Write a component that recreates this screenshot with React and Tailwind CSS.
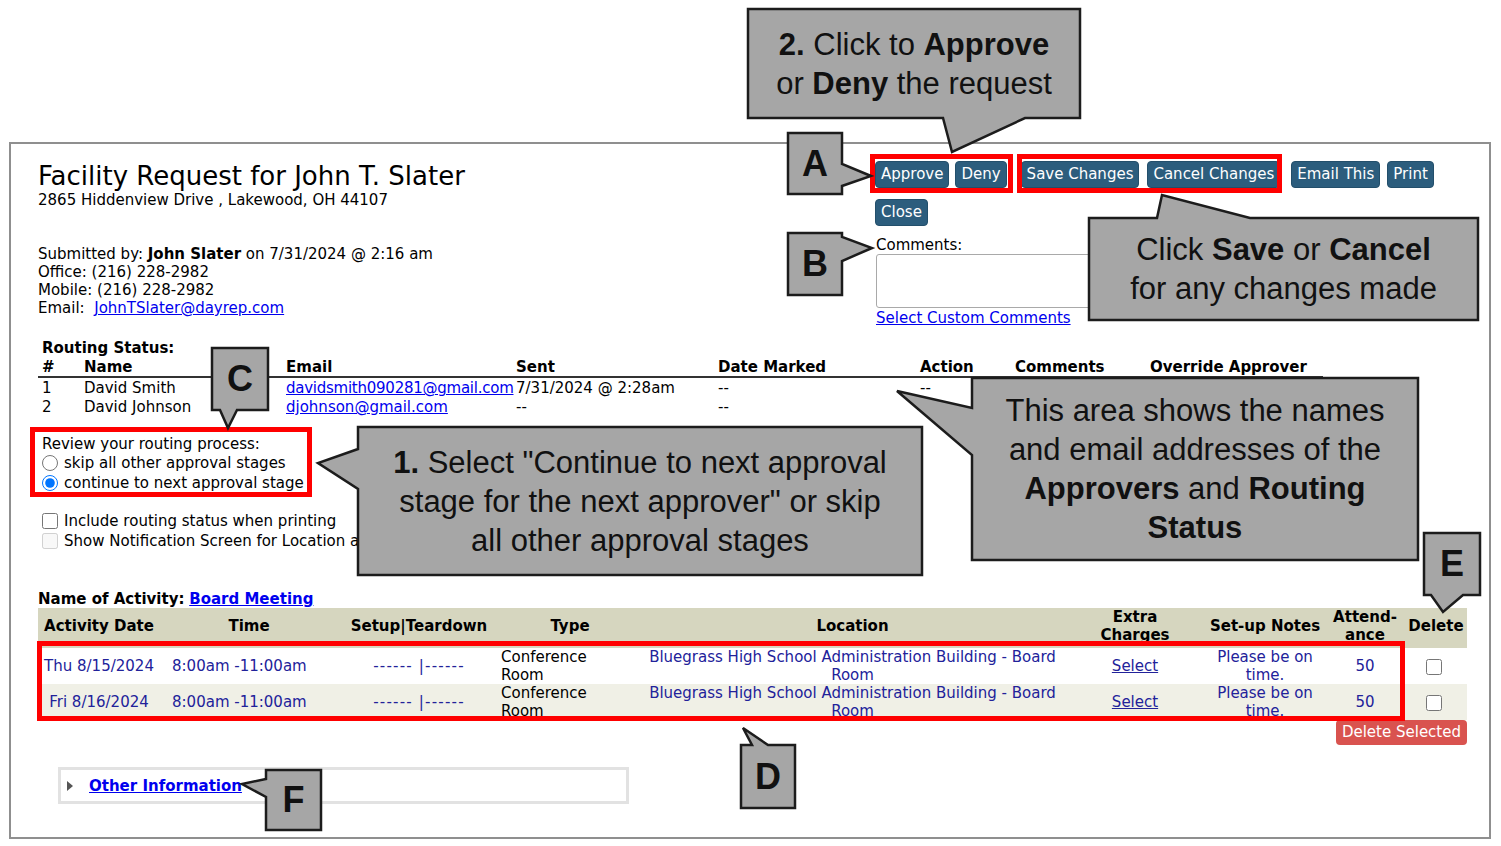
import React from 'react';

const Btn = ({ children, className = '' }) => (
  <button className={`h-[27px] px-[5px] rounded-[4px] bg-[#2c5d7d] border border-[#234f6b] text-white text-[15px] leading-none ${className}`}>
    {children}
  </button>
);

const routingCols = 'grid w-[1285px] grid-cols-[46px_202px_230px_202px_202px_95px_135px_173px]';

const Callouts = () => (
  <div className="absolute inset-0 pointer-events-none">
    <svg width="1501" height="846" className="absolute left-0 top-0">
      {/* red highlight boxes */}
      <g fill="none" stroke="#ff0000" strokeWidth="5">
        <rect x="872.5" y="156.5" width="138" height="34" />
        <rect x="1019.5" y="156.5" width="260" height="34" />
        <rect x="32.5" y="429.5" width="277" height="65" />
        <rect x="39.5" y="643.5" width="1363" height="75" />
      </g>
      {/* speech boxes */}
      <g fill="#a6a6a6" stroke="#1c1c1c" strokeWidth="2.5">
        <path d="M748 9 H1080 V118 H1025 L952 152 L943 118 H748 Z" />
        <path d="M788 133 H842 V164 L871 176 L842 186 V194 H788 Z" />
        <path d="M788 233 H842 V237 L872 248 L842 261 V295 H788 Z" />
        <path d="M1089 218 H1157 L1162 195 L1250 218 H1478 V320 H1089 Z" />
        <path d="M212 348 H268 V410 H237 L228 428 L220 410 H212 Z" />
        <path d="M358 427 H922 V575 H358 V489 L318 463 L358 449 Z" />
        <path d="M972 378 H1418 V560 H972 V455 L897 391 L972 408 Z" />
        <path d="M1424 533 H1480 V595 H1463 L1443 612 L1431 595 H1424 Z" />
        <path d="M741 745 H752 L743 728 L768 745 H795 V808 H741 Z" />
        <path d="M266 770 H321 V830 H266 V797 L242 784 L266 779 Z" />
      </g>
    </svg>

    <div className="absolute left-[748px] top-[9px] w-[332px] h-[109px] flex items-center justify-center text-center font-['Liberation_Sans',Arial,sans-serif] text-[31px] leading-[39px] text-[#111]">
      <p><b>2.</b> Click to <b>Approve</b><br />or <b>Deny</b> the request</p>
    </div>
    <div className="absolute left-[1089px] top-[218px] w-[389px] h-[102px] flex items-center justify-center text-center font-['Liberation_Sans',Arial,sans-serif] text-[31px] leading-[39px] text-[#111]">
      <p>Click <b>Save</b> or <b>Cancel</b><br />for any changes made</p>
    </div>
    <div className="absolute left-[358px] top-[427px] w-[564px] h-[148px] flex items-center justify-center text-center font-['Liberation_Sans',Arial,sans-serif] text-[31px] leading-[39px] text-[#111]">
      <p><b>1.</b> Select "Continue to next approval<br />stage for the next approver" or skip<br />all other approval stages</p>
    </div>
    <div className="absolute left-[972px] top-[378px] w-[446px] h-[182px] flex items-center justify-center text-center font-['Liberation_Sans',Arial,sans-serif] text-[31px] leading-[39px] text-[#111]">
      <p>This area shows the names<br />and email addresses of the<br /><b>Approvers</b> and <b>Routing</b><br /><b>Status</b></p>
    </div>

    {[
      ['A', 'left-[788px] top-[133px] w-[54px] h-[61px]'],
      ['B', 'left-[788px] top-[233px] w-[54px] h-[62px]'],
      ['C', 'left-[212px] top-[348px] w-[56px] h-[62px]'],
      ['D', 'left-[741px] top-[745px] w-[54px] h-[63px]'],
      ['E', 'left-[1424px] top-[533px] w-[56px] h-[62px]'],
      ['F', 'left-[266px] top-[770px] w-[55px] h-[60px]'],
    ].map(([l, pos]) => (
      <div key={l} className={`absolute ${pos} flex items-center justify-center font-['Liberation_Sans',Arial,sans-serif] font-bold text-[36px] text-[#111]`}>
        {l}
      </div>
    ))}
  </div>
);

const navy = 'text-[#22229a]';

const EventRow = ({ date, shaded }) => (
  <tr className={`h-[36px] ${shaded ? 'bg-[#f0f0e6]' : 'bg-white'}`}>
    <td className={`text-center ${navy}`}>{date}</td>
    <td className={`pl-[12px] ${navy}`}>8:00am -11:00am</td>
    <td className={`text-center tracking-[1.2px] ${navy}`}>------ |------</td>
    <td className="pl-[1px] pr-[20px]">Conference Room</td>
    <td className={`text-center px-[8px] ${navy}`}>Bluegrass High School Administration Building - Board Room</td>
    <td className={`text-center ${navy}`}><a className="underline">Select</a></td>
    <td className={`text-center px-[8px] ${navy}`}>Please be on time.</td>
    <td className={`text-center ${navy}`}>50</td>
    <td className="text-center pr-[4px]"><input type="checkbox" className="w-4 h-4 m-0 align-middle" /></td>
  </tr>
);

export default function App() {
  return (
    <div className="relative w-[1501px] h-[846px] overflow-hidden bg-white text-black font-['DejaVu_Sans',Verdana,sans-serif] text-[15px] leading-[18px]">
      <div className="pt-[142px] pl-[9px]">
        <div className="w-[1482px] h-[697px] border-2 border-[#8f8f8f] pl-[27px] pt-[17px]">
          {/* Header */}
          <div className="flex items-start">
            <div className="w-[837px]">
              <h1 className="text-[26px] leading-[30px] font-normal">Facility Request for John T. Slater</h1>
              <div>2865 Hiddenview Drive , Lakewood, OH 44107</div>
              <div className="mt-[36px]">Submitted by: <b>John Slater</b> on 7/31/2024 @ 2:16 am</div>
              <div>Office: (216) 228-2982</div>
              <div>Mobile: (216) 228-2982</div>
              <div>Email:&nbsp; <a className="text-[#0000ee] underline">JohnTSlater@dayrep.com</a></div>
            </div>
            <div className="flex flex-col items-start">
              <div className="flex">
                <Btn>Approve</Btn>
                <Btn className="ml-[6px]">Deny</Btn>
                <Btn className="ml-[14px]">Save Changes</Btn>
                <Btn className="ml-[8px]">Cancel Changes</Btn>
                <Btn className="ml-[11px]">Email This</Btn>
                <Btn className="ml-[7px]">Print</Btn>
              </div>
              <Btn className="mt-[11px]">Close</Btn>
              <div className="mt-[10px] ml-[1px]">Comments:</div>
              <textarea className="ml-[1px] w-[290px] h-[54px] border border-[#a9a9a9] rounded-[3px] resize-none" />
              <a className="mt-[1px] ml-[1px] text-[#0000ee] underline">Select Custom Comments</a>
            </div>
          </div>

          {/* Routing status */}
          <div className="mt-[12px] pl-[4px] font-bold">Routing Status:</div>
          <div className={`${routingCols} h-[21px] pt-[1px] border-b-2 border-[#333] font-bold`}>
            <span className="pl-[4px]">#</span>
            <span>Name</span>
            <span>Email</span>
            <span>Sent</span>
            <span>Date Marked</span>
            <span>Action</span>
            <span>Comments</span>
            <span>Override Approver</span>
          </div>
          <div className={`${routingCols} h-[20px] pt-[1px] leading-[19px]`}>
            <span className="pl-[4px]">1</span>
            <span>David Smith</span>
            <a className="text-[#0000ee] underline whitespace-nowrap tracking-[-0.25px]">davidsmith090281@gmail.com</a>
            <span>7/31/2024 @ 2:28am</span>
            <span>--</span>
            <span>--</span>
            <span></span>
            <span></span>
          </div>
          <div className={`${routingCols} h-[19px] leading-[19px]`}>
            <span className="pl-[4px]">2</span>
            <span>David Johnson</span>
            <a className="text-[#0000ee] underline">djohnson@gmail.com</a>
            <span>--</span>
            <span>--</span>
            <span></span>
            <span></span>
            <span></span>
          </div>

          {/* Routing process */}
          <div className="mt-[18px] pl-[4px]">
            <div>Review your routing process:</div>
            <label className="flex items-center h-[20px]">
              <input type="radio" name="route" className="w-4 h-4 m-0" />
              <span className="ml-[6px]">skip all other approval stages</span>
            </label>
            <label className="flex items-center h-[20px]">
              <input type="radio" name="route" defaultChecked className="w-4 h-4 m-0" />
              <span className="ml-[6px]">continue to next approval stage</span>
            </label>
            <label className="flex items-center h-[20px] mt-[18px]">
              <input type="checkbox" className="w-4 h-4 m-0" />
              <span className="ml-[6px]">Include routing status when printing</span>
            </label>
            <label className="flex items-center h-[20px]">
              <input type="checkbox" disabled className="w-4 h-4 m-0" />
              <span className="ml-[6px] whitespace-nowrap">Show Notification Screen for Location and</span>
            </label>
          </div>

          {/* Activity */}
          <div className="mt-[39px]">
            <b>Name of Activity:</b> <a className="font-bold text-[#0000ee] underline">Board Meeting</a>
          </div>
          <table className="w-[1429px] table-fixed">
            <colgroup>
              <col className="w-[122px]" />
              <col className="w-[178px]" />
              <col className="w-[162px]" />
              <col className="w-[140px]" />
              <col className="w-[425px]" />
              <col className="w-[140px]" />
              <col className="w-[120px]" />
              <col className="w-[80px]" />
              <col className="w-[62px]" />
            </colgroup>
            <thead>
              <tr className="h-[40px] bg-[#d6d6bf] font-bold text-center">
                <th className="pb-[4px]">Activity Date</th>
                <th className="pb-[4px]">Time</th>
                <th className="pb-[4px]">Setup|Teardown</th>
                <th className="pb-[4px]">Type</th>
                <th className="pb-[4px]">Location</th>
                <th className="pb-[4px]">Extra<br />Charges</th>
                <th className="pb-[4px]">Set-up Notes</th>
                <th className="pb-[4px]">Attend-<br />ance</th>
                <th className="pb-[4px]">Delete</th>
              </tr>
            </thead>
            <tbody>
              <EventRow date="Thu 8/15/2024" />
              <EventRow date="Fri 8/16/2024" shaded />
            </tbody>
          </table>
          <div className="w-[1429px] flex justify-end">
            <button className="h-[25px] px-[6px] rounded-[4px] bg-[#d9534f] text-white text-[15px] leading-none">Delete Selected</button>
          </div>

          {/* Other information */}
          <div className="mt-[22px] ml-[20px] w-[571px] h-[37px] border-[3px] border-[#e2e2e2] flex items-center pl-[6px]">
            <svg width="6" height="10" viewBox="0 0 6 10"><path d="M0 0 L6 5 L0 10 Z" fill="#555" /></svg>
            <a className="ml-[16px] font-bold text-[#0000ee] underline">Other Information</a>
          </div>
        </div>
      </div>
      <Callouts />
    </div>
  );
}
